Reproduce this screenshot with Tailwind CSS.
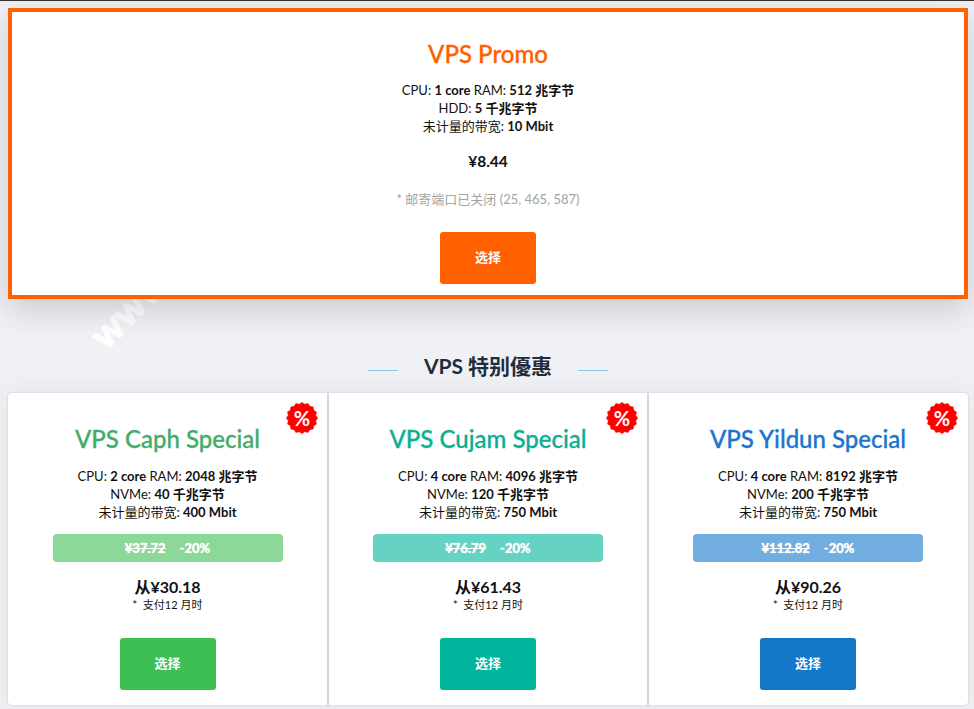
<!DOCTYPE html>
<html lang="zh">
<head>
<meta charset="utf-8">
<script src="https://cdn.jsdelivr.net/npm/@tailwindcss/browser@4"></script>
</head>
<body class="h-[709px] overflow-hidden bg-[#f0f1f5] font-['Lato','Noto_Sans_CJK_SC',sans-serif] text-[13px] leading-[18px] text-[#111]">
<svg class="hidden"><symbol id="burst" viewBox="0 0 32 32"><polygon fill="#ff0000" stroke="#ff0000" stroke-width="0.6" stroke-linejoin="round" points="16,.4 18.73,2.27 22.12,1.6 23.78,4.36 27.1,4.9 27.64,8.22 30.4,9.88 29.73,13.27 31.6,16 29.73,18.73 30.4,22.12 27.64,23.78 27.1,27.1 23.78,27.64 22.12,30.4 18.73,29.73 16,31.6 13.27,29.73 9.88,30.4 8.22,27.64 4.9,27.1 4.36,23.78 1.6,22.12 2.27,18.73 .4,16 2.27,13.27 1.6,9.88 4.36,8.22 4.9,4.9 8.22,4.36 9.88,1.6 13.27,2.27"/></symbol></svg>
<div class="h-px bg-[#333]"></div>
<main class="relative flex w-[968px] flex-col pl-2 pt-[7px]">
  <span class="absolute left-[82px] top-[288px] rotate-[-45deg] text-[38px] leading-[38px] font-bold text-white [-webkit-text-stroke:1.5px_#fff]">www</span>
  <section class="relative flex h-[291px] flex-col items-center border-4 border-[#ff6000] bg-white pt-[28px] text-center shadow-[0_10px_30px_rgba(40,45,60,0.2)]">
    <h2 class="h-[28px] text-[24px] leading-[28px] font-medium text-[#ff6000] [-webkit-text-stroke:0.3px]">VPS Promo</h2>
    <p class="mt-[13px]">CPU: <b class="font-bold">1 core</b> RAM: <b class="font-bold">512 兆字节</b><br>HDD: <b class="font-bold">5 千兆字节</b><br>未计量的带宽: <b class="font-bold">10 Mbit</b></p>
    <p class="mt-[16px] text-[15.5px] leading-[20px] font-bold">¥8.44</p>
    <p class="mt-[19px] text-[#a3a3a3]">* 邮寄端口已关闭 (25, 465, 587)</p>
    <a class="mt-[24px] flex h-[52px] w-[96px] items-center justify-center rounded-[3px] bg-[#ff6000] pb-[2px] text-[13px] font-bold text-white">选择</a>
  </section>
  <div class="mt-[51px] flex h-[32px] justify-center">
    <span class="mt-[20px] h-px w-[30px] bg-[#8cc4f0]"></span>
    <h2 class="mx-[26px] text-[21px] leading-[32px] font-bold text-[#1f2d3d]">VPS 特别優惠</h2>
    <span class="mt-[20px] h-px w-[30px] bg-[#8cc4f0]"></span>
  </div>
  <section class="mt-[11px] grid h-[312px] grid-cols-3 rounded-[4px] bg-white text-center shadow-[0_0_0_1px_#dedfe3,0_0_24px_rgba(40,45,60,0.08)]">
    <article class="relative flex flex-col items-center border-r-1 border-[#d8d8d8] pt-[30px]">
      <div class="absolute right-[9px] top-[9px] flex h-[32px] w-[32px] items-center justify-center"><svg class="absolute inset-0 h-8 w-8"><use href="#burst"/></svg><span class="relative text-[20px] font-bold text-white">%</span></div>
      <h3 class="h-[32px] text-[24px] leading-[32px] font-medium text-[#43ac6a] [-webkit-text-stroke:0.3px]">VPS Caph Special</h3>
      <p class="mt-[12px]">CPU: <b class="font-bold">2 core</b> RAM: <b class="font-bold">2048 兆字节</b><br>NVMe: <b class="font-bold">40 千兆字节</b><br>未计量的带宽: <b class="font-bold">400 Mbit</b></p>
      <div class="mt-[13px] flex h-[28px] w-[230px] items-center justify-center gap-[14px] rounded-[4px] bg-[#8bd899] font-bold text-white [text-shadow:0_0_1px_#fff]"><s>¥37.72</s><span>-20%</span></div>
      <p class="mt-[15px] text-[16px] leading-[20px] font-bold">从¥30.18</p>
      <p class="text-[11px] leading-[16px]">*&nbsp; 支付12 月时</p>
      <a class="mt-[25px] flex h-[52px] w-[96px] items-center justify-center rounded-[3px] bg-[#3dbf55] pb-[2px] font-bold text-white">选择</a>
    </article>
    <article class="relative flex flex-col items-center border-x-1 border-[#d8d8d8] pt-[30px]">
      <div class="absolute right-[9px] top-[9px] flex h-[32px] w-[32px] items-center justify-center"><svg class="absolute inset-0 h-8 w-8"><use href="#burst"/></svg><span class="relative text-[20px] font-bold text-white">%</span></div>
      <h3 class="h-[32px] text-[24px] leading-[32px] font-medium text-[#0caf94] [-webkit-text-stroke:0.3px]">VPS Cujam Special</h3>
      <p class="mt-[12px]">CPU: <b class="font-bold">4 core</b> RAM: <b class="font-bold">4096 兆字节</b><br>NVMe: <b class="font-bold">120 千兆字节</b><br>未计量的带宽: <b class="font-bold">750 Mbit</b></p>
      <div class="mt-[13px] flex h-[28px] w-[230px] items-center justify-center gap-[14px] rounded-[4px] bg-[#66d2c1] font-bold text-white [text-shadow:0_0_1px_#fff]"><s>¥76.79</s><span>-20%</span></div>
      <p class="mt-[15px] text-[16px] leading-[20px] font-bold">从¥61.43</p>
      <p class="text-[11px] leading-[16px]">*&nbsp; 支付12 月时</p>
      <a class="mt-[25px] flex h-[52px] w-[96px] items-center justify-center rounded-[3px] bg-[#00b39b] pb-[2px] font-bold text-white">选择</a>
    </article>
    <article class="relative flex flex-col items-center border-x-1 border-l-[#d8d8d8] border-r-transparent pt-[30px]">
      <div class="absolute right-[9px] top-[9px] flex h-[32px] w-[32px] items-center justify-center"><svg class="absolute inset-0 h-8 w-8"><use href="#burst"/></svg><span class="relative text-[20px] font-bold text-white">%</span></div>
      <h3 class="h-[32px] text-[24px] leading-[32px] font-medium text-[#1b75cb] [-webkit-text-stroke:0.3px]">VPS Yildun Special</h3>
      <p class="mt-[12px]">CPU: <b class="font-bold">4 core</b> RAM: <b class="font-bold">8192 兆字节</b><br>NVMe: <b class="font-bold">200 千兆字节</b><br>未计量的带宽: <b class="font-bold">750 Mbit</b></p>
      <div class="mt-[13px] flex h-[28px] w-[230px] items-center justify-center gap-[14px] rounded-[4px] bg-[#72addf] font-bold text-white [text-shadow:0_0_1px_#fff]"><s>¥112.82</s><span>-20%</span></div>
      <p class="mt-[15px] text-[16px] leading-[20px] font-bold">从¥90.26</p>
      <p class="text-[11px] leading-[16px]">*&nbsp; 支付12 月时</p>
      <a class="mt-[25px] flex h-[52px] w-[96px] items-center justify-center rounded-[3px] bg-[#1478c8] pb-[2px] font-bold text-white">选择</a>
    </article>
  </section>
</main>
</body>
</html>
